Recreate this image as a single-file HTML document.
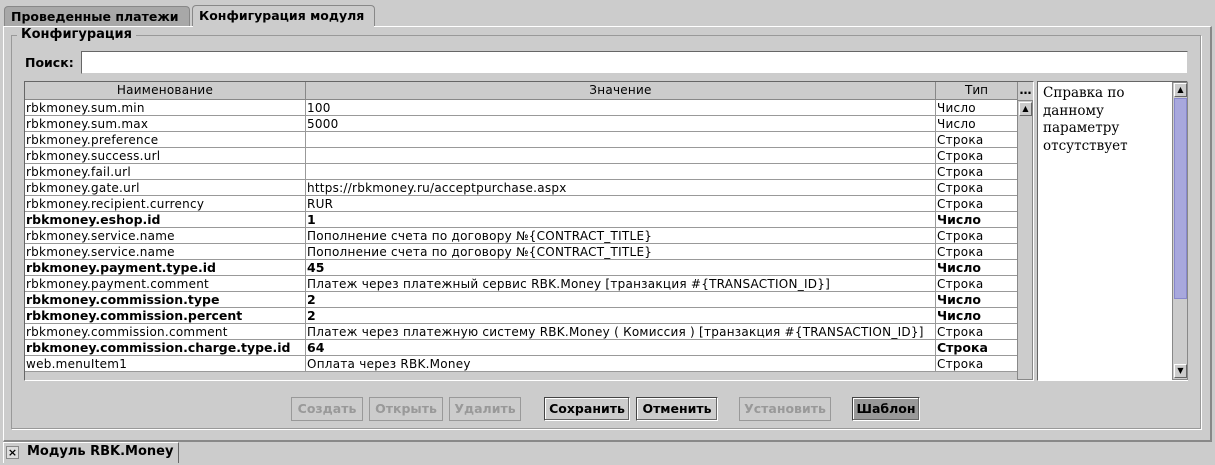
<!DOCTYPE html>
<html><head><meta charset="utf-8"><style>
*{margin:0;padding:0;box-sizing:border-box}
body{width:1215px;height:465px;background:#cccccc;font-family:"DejaVu Sans","Liberation Sans",sans-serif;font-size:12px;color:#000;position:relative;overflow:hidden}
.a{position:absolute;white-space:nowrap}
.tab{position:absolute;top:6px;height:20px;border:1px solid #888;border-bottom:none;font-weight:bold;font-size:12.5px;padding:2px 6px;border-radius:4px 4px 0 0;white-space:nowrap;overflow:hidden}
.row{position:absolute;left:0;height:16px;width:992px;border-bottom:1px solid #999;background:#fff;white-space:nowrap}
.row span{position:absolute;top:0;height:16px;line-height:16px;padding-left:1px;overflow:hidden;font-size:12px;letter-spacing:0.25px}
.row.b span{font-weight:bold;font-size:12.5px;letter-spacing:0}
.c1{left:0;width:281px;border-right:1px solid #999}
.c2{left:281px;width:630px;border-right:1px solid #999}
.c3{left:911px;width:81px}
.btn{position:absolute;top:397px;height:24px;border:1px solid #999;font-weight:bold;font-size:12.5px;text-align:center;line-height:22px;color:#999;white-space:nowrap}
.btn.on{color:#000;border:1px solid #444;border-right-color:#fff;border-bottom-color:#fff;box-shadow:inset -1px -1px 0 #666,inset 1px 1px 0 #fff}
.sb{background:#ccc;border:1px solid #888}
.arr{position:absolute;left:1px;width:13px;height:14px;background:#ccc;border:1px solid #fff;border-right-color:#666;border-bottom-color:#666;font-size:8px;text-align:center;line-height:12px}
</style></head><body>
<div class="tab" style="left:4px;width:186px;background:#a8a8a8">Проведенные платежи</div>
<div class="tab" style="left:192px;width:183px;background:#cccccc;top:5px;height:22px">Конфигурация модуля</div>
<div class="a" style="left:3px;top:26px;width:1209px;height:416px;border:2px solid #888;border-top:1px solid #fff;border-left:1px solid #fff;box-shadow:inset -1px -1px 0 #ccc"></div>
<div class="a" style="left:193px;top:25px;width:181px;height:3px;background:#ccc"></div>
<div class="a" style="left:11px;top:35px;width:1190px;height:394px;border:1px solid #999;box-shadow:1px 1px 0 #fff"></div>
<div class="a" style="left:17px;top:27px;background:#ccc;padding:0 4px;font-weight:bold;font-size:13px;line-height:15px">Конфигурация</div>
<div class="a" style="left:25px;top:55px;font-weight:bold;font-size:12.5px">Поиск:</div>
<div class="a" style="left:81px;top:51px;width:1107px;height:23px;background:#fff;border:1px solid #666;border-right-color:#ccc;border-bottom-color:#ccc"></div>
<div class="a" style="left:24px;top:81px;width:1010px;height:300px;border:1px solid #666;border-right-color:#fff;border-bottom-color:#fff;background:#ccc"></div>
<div class="a" style="left:25px;top:82px;width:992px;height:18px;background:#ccc;border-bottom:1px solid #888">
 <div class="a" style="left:0;top:0;width:281px;height:18px;border-right:1px solid #888;text-align:center;line-height:17px;letter-spacing:0.25px">Наименование</div>
 <div class="a" style="left:281px;top:0;width:630px;height:18px;border-right:1px solid #888;text-align:center;line-height:17px;letter-spacing:0.25px">Значение</div>
 <div class="a" style="left:911px;top:0;width:81px;height:18px;text-align:center;line-height:17px">Тип</div>
</div>
<div class="a" style="left:1017px;top:82px;width:16px;height:18px;border-left:1px solid #888;text-align:center;font-weight:bold;line-height:16px">…</div>
<div class="a" style="left:25px;top:100px;width:992px;height:280px">
<div class="row" style="top:0"><span class="c1">rbkmoney.sum.min</span><span class="c2">100</span><span class="c3">Число</span></div>
<div class="row" style="top:16px"><span class="c1">rbkmoney.sum.max</span><span class="c2">5000</span><span class="c3">Число</span></div>
<div class="row" style="top:32px"><span class="c1">rbkmoney.preference</span><span class="c2"></span><span class="c3">Строка</span></div>
<div class="row" style="top:48px"><span class="c1">rbkmoney.success.url</span><span class="c2"></span><span class="c3">Строка</span></div>
<div class="row" style="top:64px"><span class="c1">rbkmoney.fail.url</span><span class="c2"></span><span class="c3">Строка</span></div>
<div class="row" style="top:80px"><span class="c1">rbkmoney.gate.url</span><span class="c2">https://rbkmoney.ru/acceptpurchase.aspx</span><span class="c3">Строка</span></div>
<div class="row" style="top:96px"><span class="c1">rbkmoney.recipient.currency</span><span class="c2">RUR</span><span class="c3">Строка</span></div>
<div class="row b" style="top:112px"><span class="c1">rbkmoney.eshop.id</span><span class="c2">1</span><span class="c3">Число</span></div>
<div class="row" style="top:128px"><span class="c1">rbkmoney.service.name</span><span class="c2">Пополнение счета по договору №{CONTRACT_TITLE}</span><span class="c3">Строка</span></div>
<div class="row" style="top:144px"><span class="c1">rbkmoney.service.name</span><span class="c2">Пополнение счета по договору №{CONTRACT_TITLE}</span><span class="c3">Строка</span></div>
<div class="row b" style="top:160px"><span class="c1">rbkmoney.payment.type.id</span><span class="c2">45</span><span class="c3">Число</span></div>
<div class="row" style="top:176px"><span class="c1">rbkmoney.payment.comment</span><span class="c2">Платеж через платежный сервис RBK.Money [транзакция #{TRANSACTION_ID}]</span><span class="c3">Строка</span></div>
<div class="row b" style="top:192px"><span class="c1">rbkmoney.commission.type</span><span class="c2">2</span><span class="c3">Число</span></div>
<div class="row b" style="top:208px"><span class="c1">rbkmoney.commission.percent</span><span class="c2">2</span><span class="c3">Число</span></div>
<div class="row" style="top:224px"><span class="c1">rbkmoney.commission.comment</span><span class="c2">Платеж через платежную систему RBK.Money ( Комиссия ) [транзакция #{TRANSACTION_ID}]</span><span class="c3">Строка</span></div>
<div class="row b" style="top:240px"><span class="c1">rbkmoney.commission.charge.type.id</span><span class="c2">64</span><span class="c3">Строка</span></div>
<div class="row" style="top:256px"><span class="c1">web.menuItem1</span><span class="c2">Оплата через RBK.Money</span><span class="c3">Строка</span></div>
</div>
<div class="a sb" style="left:1017px;top:100px;width:16px;height:280px">
 <div class="arr" style="top:1px">▲</div>
</div>
<div class="a" style="left:1037px;top:81px;width:151px;height:300px;border:1px solid #666;border-right-color:#fff;border-bottom-color:#fff;background:#fff"></div>
<div class="a" style="left:1043px;top:85px;font-family:'DejaVu Serif','Liberation Serif',serif;font-size:13.5px;line-height:17.5px">Справка по<br>данному<br>параметру<br>отсутствует</div>
<div class="a sb" style="left:1172px;top:82px;width:16px;height:298px">
 <div class="arr" style="top:0">▲</div>
 <div class="a" style="left:1px;top:15px;width:13px;height:201px;background:#a8a8dd;border:1px solid #8888cc"></div>
 <div class="arr" style="top:281px">▼</div>
</div>
<div class="btn" style="left:291px;width:72px">Создать</div>
<div class="btn" style="left:369px;width:74px">Открыть</div>
<div class="btn" style="left:449px;width:72px">Удалить</div>
<div class="btn on" style="left:544px;width:86px">Сохранить</div>
<div class="btn on" style="left:636px;width:82px">Отменить</div>
<div class="btn" style="left:739px;width:92px">Установить</div>
<div class="btn on" style="left:852px;width:68px;background:#999">Шаблон</div>
<div class="a" style="left:3px;top:442px;width:176px;height:21px;border:1px solid #fff;border-right-color:#666;border-bottom:none;background:#ccc"></div>
<div class="a" style="left:6px;top:446px;width:13px;height:13px;border:1px solid #888;background:#ddd;font-size:11px;font-weight:bold;text-align:center;line-height:11px">×</div>
<div class="a" style="left:27px;top:444px;font-weight:bold;font-size:13px">Модуль RBK.Money</div>
</body></html>
